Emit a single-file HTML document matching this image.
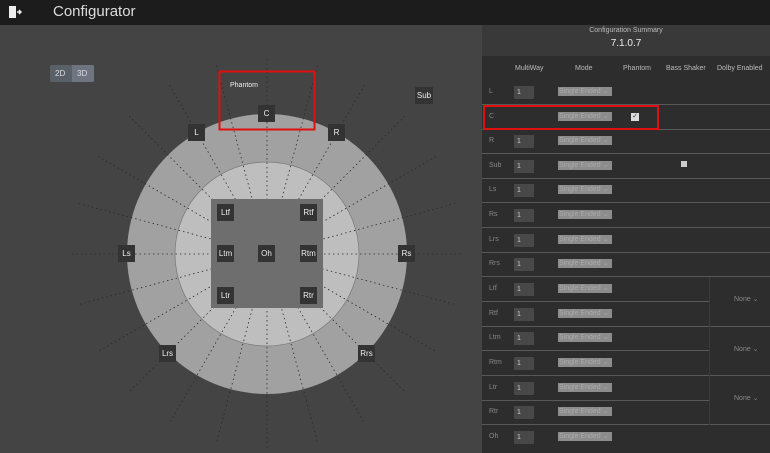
<!DOCTYPE html>
<html><head><meta charset="utf-8"><style>
*{margin:0;padding:0;box-sizing:border-box}
body{width:770px;height:453px;overflow:hidden;background:#444;font-family:"Liberation Sans",sans-serif;position:relative}
#top{position:absolute;left:0;top:0;width:770px;height:25px;background:#1c1c1c}
#top .t{position:absolute;left:53px;top:3px;color:#ddd;font-size:15px}
#panel{position:absolute;left:482px;top:25px;width:288px;height:428px;background:#2d2d2d}
#sum{position:absolute;left:0;top:0;width:288px;height:31px;background:#393939;text-align:center;color:#bbb}
.row{position:absolute;left:0;width:288px;height:25px;border-bottom:1px solid #595959;font-size:7px;color:#888}
.lb{position:absolute;left:7px;top:8px}
.in{position:absolute;left:32px;top:6px;width:20px;height:13px;background:#484848;color:#ccc;font-size:7px;padding:3px 0 0 3px}
.sel{position:absolute;left:76px;top:7px;width:54px;height:9px;background:#8c8c8c;color:#aaa;font-size:7px;line-height:9px;padding-left:1px;white-space:nowrap;overflow:hidden}
.hd{position:absolute;top:40px;font-size:7px;color:#bbb}
.sp{position:absolute;background:#333;color:#eee;font-size:8px;text-align:center;width:17px;height:17px;line-height:17px}
</style></head><body>
<div id="top"><svg style="position:absolute;left:8px;top:5px" width="14" height="14"><rect x="1" y="1" width="7" height="12" fill="#eee"/><path d="M9 7h4M11 5l2 2-2 2" stroke="#eee" stroke-width="1.5" fill="none"/></svg><div class="t">Configurator</div></div>
<div style="position:absolute;left:50px;top:65px;width:44px;height:17px;border-radius:2px;background:#5a6068"></div>
<div style="position:absolute;left:72px;top:65px;width:22px;height:17px;background:#6e7580;border-radius:0 2px 2px 0"></div>
<div style="position:absolute;left:55px;top:69px;font-size:8px;color:#ddd">2D</div>
<div style="position:absolute;left:77px;top:69px;font-size:8px;color:#ddd">3D</div>
<svg style="position:absolute;left:0;top:0" width="482" height="453">
<circle cx="267" cy="254" r="140" fill="#a1a1a1"/>
<circle cx="267" cy="254" r="92" fill="#bebebe" stroke="#777" stroke-width="0.7"/>
<g stroke="#2a2a2a" stroke-width="0.8" stroke-dasharray="1.5,3">
<line x1="72" y1="254" x2="462" y2="254"/><line x1="78.7" y1="203.5" x2="455.3" y2="304.5"/><line x1="98.1" y1="156.5" x2="435.9" y2="351.5"/><line x1="129.1" y1="116.1" x2="404.9" y2="391.9"/><line x1="169.5" y1="85.1" x2="364.5" y2="422.9"/><line x1="216.5" y1="65.7" x2="317.5" y2="442.3"/><line x1="267" y1="59" x2="267" y2="449"/><line x1="317.5" y1="65.7" x2="216.5" y2="442.3"/><line x1="364.5" y1="85.1" x2="169.5" y2="422.9"/><line x1="404.9" y1="116.1" x2="129.1" y2="391.9"/><line x1="435.9" y1="156.5" x2="98.1" y2="351.5"/><line x1="455.3" y1="203.5" x2="78.7" y2="304.5"/>
</g>
<rect x="211" y="199" width="112" height="109" fill="#6e6e6e"/>
<rect x="219.5" y="71.5" width="95" height="58" fill="none" stroke="#e01010" stroke-width="2"/>
<text x="230" y="87" font-size="7" fill="#eee" font-family="Liberation Sans">Phantom</text>
</svg>
<div class="sp" style="left:258px;top:105px">C</div>
<div class="sp" style="left:188px;top:124px">L</div>
<div class="sp" style="left:328px;top:124px">R</div>
<div class="sp" style="left:415px;top:87px;width:18px">Sub</div>
<div class="sp" style="left:118px;top:245px">Ls</div>
<div class="sp" style="left:398px;top:245px">Rs</div>
<div class="sp" style="left:159px;top:345px">Lrs</div>
<div class="sp" style="left:358px;top:345px">Rrs</div>
<div class="sp" style="left:217px;top:204px">Ltf</div>
<div class="sp" style="left:300px;top:204px">Rtf</div>
<div class="sp" style="left:217px;top:245px">Ltm</div>
<div class="sp" style="left:258px;top:245px">Oh</div>
<div class="sp" style="left:300px;top:245px">Rtm</div>
<div class="sp" style="left:217px;top:287px">Ltr</div>
<div class="sp" style="left:300px;top:287px">Rtr</div>
<div id="panel">
<div id="sum"><div style="font-size:7px;margin-top:2px">Configuration Summary</div><div style="font-size:10px;color:#eee;margin-top:4px">7.1.0.7</div></div>
<div class="hd" style="left:33px">MultiWay</div><div class="hd" style="left:93px">Mode</div><div class="hd" style="left:141px">Phantom</div><div class="hd" style="left:184px">Bass Shaker</div><div class="hd" style="left:235px">Dolby Enabled</div>
<div class="row" style="top:55px"><span class="lb">L</span><div class="in">1</div><div class="sel">Single Ended ⌄</div></div>
<div class="row" style="top:80px"><span class="lb">C</span><div class="sel">Single Ended ⌄</div><div style="position:absolute;left:149px;top:8px;width:8px;height:8px;background:#ddd;font-size:7px;line-height:8px;color:#333;text-align:center">✓</div></div>
<div class="row" style="top:104px"><span class="lb">R</span><div class="in">1</div><div class="sel">Single Ended ⌄</div></div>
<div class="row" style="top:129px"><span class="lb">Sub</span><div class="in">1</div><div class="sel">Single Ended ⌄</div><div style="position:absolute;left:199px;top:7px;width:6px;height:6px;background:#ccc"></div></div>
<div class="row" style="top:153px"><span class="lb">Ls</span><div class="in">1</div><div class="sel">Single Ended ⌄</div></div>
<div class="row" style="top:178px"><span class="lb">Rs</span><div class="in">1</div><div class="sel">Single Ended ⌄</div></div>
<div class="row" style="top:203px"><span class="lb">Lrs</span><div class="in">1</div><div class="sel">Single Ended ⌄</div></div>
<div class="row" style="top:227px"><span class="lb">Rrs</span><div class="in">1</div><div class="sel">Single Ended ⌄</div></div>
<div class="row" style="top:252px;width:227px"><span class="lb">Ltf</span><div class="in">1</div><div class="sel">Single Ended ⌄</div></div>
<div class="row" style="top:277px"><span class="lb">Rtf</span><div class="in">1</div><div class="sel">Single Ended ⌄</div></div>
<div class="row" style="top:301px;width:227px"><span class="lb">Ltm</span><div class="in">1</div><div class="sel">Single Ended ⌄</div></div>
<div class="row" style="top:326px"><span class="lb">Rtm</span><div class="in">1</div><div class="sel">Single Ended ⌄</div></div>
<div class="row" style="top:351px;width:227px"><span class="lb">Ltr</span><div class="in">1</div><div class="sel">Single Ended ⌄</div></div>
<div class="row" style="top:375px"><span class="lb">Rtr</span><div class="in">1</div><div class="sel">Single Ended ⌄</div></div>
<div class="row" style="top:400px;border:none"><span class="lb">Oh</span><div class="in">1</div><div class="sel">Single Ended ⌄</div></div>
<div style="position:absolute;left:227px;top:252px;width:1px;height:148px;background:#3a3a3a"></div>
<div style="position:absolute;left:252px;top:270px;font-size:7px;color:#888">None ⌄</div>
<div style="position:absolute;left:252px;top:320px;font-size:7px;color:#888">None ⌄</div>
<div style="position:absolute;left:252px;top:369px;font-size:7px;color:#888">None ⌄</div>
</div>
<div style="position:absolute;left:483px;top:105px;width:176px;height:25px;border:2px solid #e01010"></div>
</body></html>
